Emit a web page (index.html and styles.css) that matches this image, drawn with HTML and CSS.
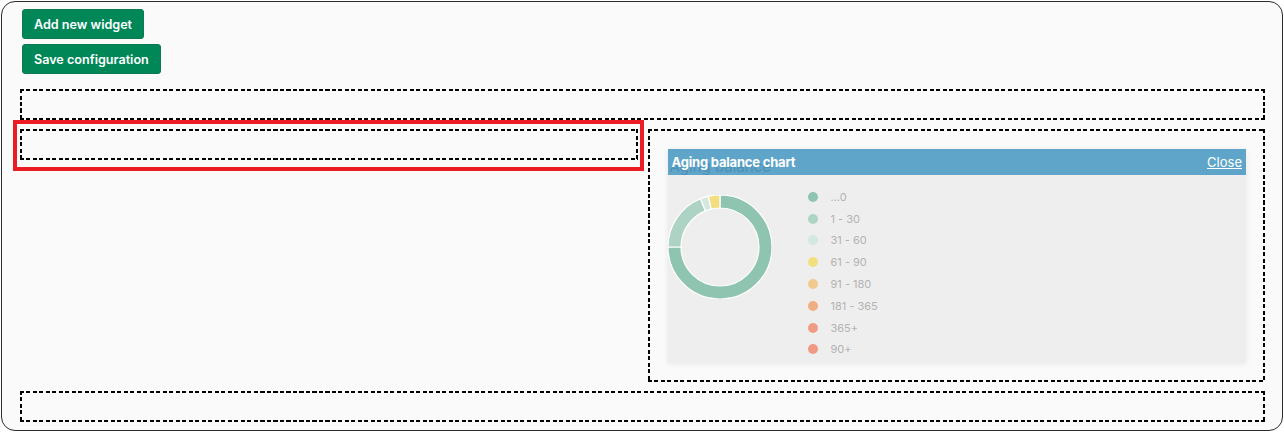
FILE: index.html
```html
<!DOCTYPE html>
<html>
<head>
    <meta charset="UTF-8">
    <title>Dashboard</title>
    <link rel="stylesheet" href="styles.css">
</head>
<body>
    <div class="container">
        <div class="toolbar">
            <button class="btn">Add new widget</button>
            <button class="btn">Save configuration</button>
        </div>

        <div class="zone zone-row"></div>

        <div class="columns">
            <div class="column column-left">
                <div class="zone zone-row"></div>
            </div>
            <div class="column column-right">
                <div class="zone zone-widgets">
                    <div class="widget">
                        <div class="widget-header">
                            <span class="ghost-title">Aging balance</span>
                            <span class="widget-title">Aging balance chart</span>
                            <a href="#" class="close-link">Close</a>
                        </div>
                        <div class="widget-body">
                            <svg class="donut" width="104" height="104" viewBox="0 0 104 104">
                                <path fill="#8ec4b0" d="M52 0 A52 52 0 1 1 0 52 L13 52 A39 39 0 1 0 52 13 Z"/>
                                <path fill="#acd3c3" d="M0 52 A52 52 0 0 1 32.52 3.79 L37.39 15.84 A39 39 0 0 0 13 52 Z"/>
                                <path fill="#d3e8e0" d="M32.52 3.79 A52 52 0 0 1 40.30 1.33 L43.23 14.00 A39 39 0 0 0 37.39 15.84 Z"/>
                                <path fill="#f2dd80" d="M40.30 1.33 A52 52 0 0 1 52 0 L52 13 A39 39 0 0 0 43.23 14.00 Z"/>
                            </svg>
                            <ul class="legend">
                                <li><span class="dot" style="background:#8ec4b0"></span>...0</li>
                                <li><span class="dot" style="background:#acd5c4"></span>1 - 30</li>
                                <li><span class="dot" style="background:#d3e8e0"></span>31 - 60</li>
                                <li><span class="dot" style="background:#f2df80"></span>61 - 90</li>
                                <li><span class="dot" style="background:#f2ca90"></span>91 - 180</li>
                                <li><span class="dot" style="background:#f0ae82"></span>181 - 365</li>
                                <li><span class="dot" style="background:#f19d85"></span>365+</li>
                                <li><span class="dot" style="background:#f09a84"></span>90+</li>
                            </ul>
                        </div>
                    </div>
                </div>
            </div>
        </div>

        <div class="zone zone-row zone-bottom"></div>
    </div>
</body>
</html>
```

FILE: styles.css
```css
body {
    font-family: Inter, "Liberation Sans", Arial, sans-serif;
    background-color: #ffffff;
    margin: 0;
    padding: 1px;
}
.container {
    box-sizing: border-box;
    width: 1282px;
    height: 430px;
    border: 1px solid #2b2b2b;
    border-radius: 14px;
    background: #fafafa;
    padding: 7px 17px 0 18px;
}
.toolbar {
    display: flex;
    flex-direction: column;
    align-items: flex-start;
    gap: 5px;
    padding-left: 2px;
}
.btn {
    background-color: #008758;
    color: white;
    font-family: Inter, "Liberation Sans", Arial, sans-serif;
    font-weight: 600;
    font-size: 12.6px;
    height: 30px;
    padding: 0 11px;
    border: 1px solid #0b7a52;
    border-radius: 3px;
    cursor: pointer;
}
.zone {
    box-sizing: border-box;
    background-image:
        repeating-linear-gradient(90deg, #000 0 4px, transparent 4px 6.5px),
        repeating-linear-gradient(90deg, #000 0 4px, transparent 4px 6.5px),
        repeating-linear-gradient(180deg, #000 0 4px, transparent 4px 6.5px),
        repeating-linear-gradient(180deg, #000 0 4px, transparent 4px 6.5px);
    background-size: 100% 2px, 100% 2px, 2px 100%, 2px 100%;
    background-position: left top, left bottom, left top, right top;
    background-repeat: no-repeat;
}
.zone-row {
    height: 31px;
    margin-top: 15px;
}
.columns {
    display: flex;
    gap: 10px;
    margin-top: 9px;
}
.column {
    flex: 1;
}
.column-left {
    position: relative;
}
.column-left .zone-row {
    margin-top: 0;
}
.column-left::before {
    content: "";
    position: absolute;
    left: -7px;
    top: -9px;
    right: -6px;
    height: 51px;
    border: 4px solid #ec1c24;
    box-sizing: border-box;
    pointer-events: none;
}
.zone-widgets {
    padding: 20px 19px 19px 20px;
}
.zone-bottom {
    margin-top: 9px;
}
.widget {
    box-shadow: 0 1px 6px rgba(0,0,0,0.08);
}
.widget-header {
    position: relative;
    display: flex;
    justify-content: space-between;
    align-items: center;
    height: 26px;
    padding: 0 4px;
    background-color: #5ea5c9;
    color: white;
    font-size: 13px;
    overflow: hidden;
}
.widget-title {
    position: relative;
    z-index: 1;
    font-weight: 700;
    letter-spacing: -0.2px;
}
.ghost-title {
    position: absolute;
    left: 2px;
    top: 8px;
    font-size: 15px;
    color: #4f90b6;
}
.close-link {
    position: relative;
    z-index: 1;
    color: white;
    text-decoration: underline;
    font-size: 13px;
}
.widget-body {
    display: flex;
    align-items: flex-start;
    gap: 36px;
    background: #eeeeee;
    padding: 20px 0 6px 0;
    height: 188px;
    box-sizing: border-box;
}
.donut {
    display: block;
}
.donut path {
    stroke: #ffffff;
    stroke-width: 1.2;
}
.legend {
    list-style: none;
    margin: -9px 0 0 0;
    padding: 0;
}
.legend li {
    display: flex;
    align-items: center;
    height: 21.8px;
    font-size: 11px;
    color: #b3b3b3;
}
.dot {
    display: inline-block;
    width: 10px;
    height: 10px;
    border-radius: 50%;
    margin-right: 13px;
}
```
